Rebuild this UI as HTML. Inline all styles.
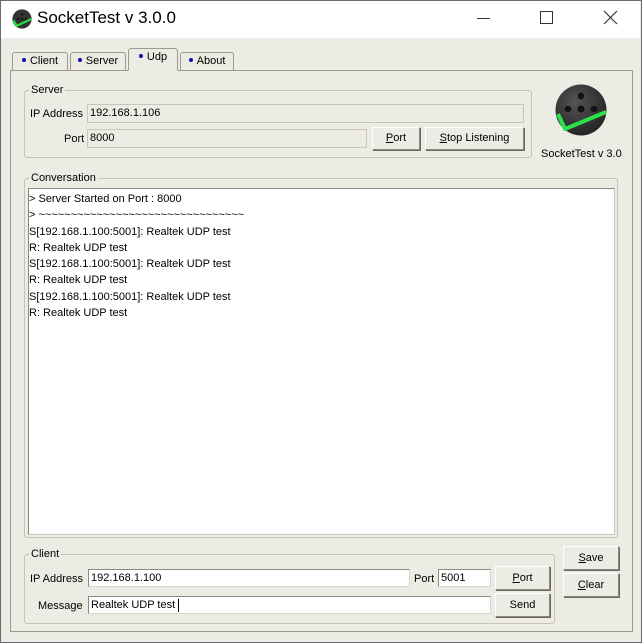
<!DOCTYPE html>
<html><head><meta charset="utf-8"><style>
*{box-sizing:border-box;margin:0;padding:0}
body{width:642px;height:643px;background:#fff;font-family:"Liberation Sans",Arial,sans-serif;font-size:11px;color:#000;position:relative;overflow:hidden}
.a{position:absolute}
.win{left:0;top:0;width:642px;height:643px;border:1px solid #6b6b6b;background:#ecebe4}
.title{left:1px;top:1px;width:639px;height:37px;background:#fff}
.grp{border:1px solid #c7c4b4;border-radius:3px}
.lbl{background:#ecebe4;padding:0 2px;line-height:13px}
.fld{border:1px solid #c9c6b8;background:#ecebe4;line-height:17px;padding-left:2px}
.wf{background:#fff;line-height:16px;padding-left:2px;border:1px solid;border-color:#8a8a80 #d8d6cc #d8d6cc #8a8a80}
.btn{border:1px solid;border-color:#fff #8a887e #8a887e #fff;background:#ecebe4;text-align:center;box-shadow:1px 1px 0 #6c6a60}
.tab{border:1px solid #9c9a8c;border-bottom:none;border-radius:3px 3px 0 0;background:#ecebe4;text-align:center;line-height:17px}
.dot{display:inline-block;width:4px;height:4px;border-radius:2px;background:#1010b0;vertical-align:middle;margin-right:4px;position:relative;top:-1px}
u{text-decoration:underline}
</style></head><body>
<div class="a win"></div>
<div class="a title"></div>
<svg class="a" style="left:12px;top:9px" width="20" height="20" viewBox="0 0 52 52"><circle cx="26" cy="26" r="25" fill="#333"/><circle cx="26" cy="14" r="3" fill="#111"/><circle cx="16" cy="26" r="3" fill="#111"/><circle cx="26" cy="26" r="3" fill="#111"/><circle cx="36" cy="26" r="3" fill="#111"/><path d="M4 30 L12 44 L50 26" stroke="#22dd44" stroke-width="6" fill="none"/></svg>
<div class="a" style="left:37px;top:8px;font-size:17px">SocketTest v 3.0.0</div>
<div class="a" style="left:477px;top:18px;width:13px;height:1px;background:#333"></div>
<div class="a" style="left:540px;top:11px;width:13px;height:13px;border:1px solid #333"></div>
<svg class="a" style="left:603px;top:10px" width="15" height="15"><path d="M1 1L14 14M14 1L1 14" stroke="#333" stroke-width="1.2"/></svg>

<div class="a" style="left:10px;top:70px;width:623px;height:562px;border:1px solid #9c9a8c"></div>
<div class="a tab" style="left:12px;top:52px;width:56px;height:18px"><span class="dot"></span>Client</div>
<div class="a tab" style="left:70px;top:52px;width:56px;height:18px"><span class="dot"></span>Server</div>
<div class="a tab" style="left:128px;top:48px;width:50px;height:23px;border-bottom:1px solid #ecebe4"><span class="dot"></span>Udp</div>
<div class="a tab" style="left:180px;top:52px;width:54px;height:18px"><span class="dot"></span>About</div>

<div class="a grp" style="left:24px;top:90px;width:508px;height:68px"></div>
<div class="a lbl" style="left:29px;top:84px">Server</div>
<div class="a" style="left:30px;top:108px">IP Address</div>
<div class="a fld" style="left:87px;top:104px;width:437px;height:19px">192.168.1.106</div>
<div class="a" style="left:64px;top:133px">Port</div>
<div class="a fld" style="left:87px;top:129px;width:280px;height:19px">8000</div>
<div class="a btn" style="left:372px;top:127px;width:48px;height:23px;line-height:21px"><u>P</u>ort</div>
<div class="a btn" style="left:425px;top:127px;width:99px;height:23px;line-height:21px"><u>S</u>top Listening</div>
<svg class="a" style="left:555px;top:84px" width="52" height="52" viewBox="0 0 52 52"><defs><radialGradient id="g" cx="0.4" cy="0.35" r="0.7"><stop offset="0" stop-color="#555"/><stop offset="1" stop-color="#222"/></radialGradient></defs><circle cx="26" cy="26" r="25.5" fill="url(#g)"/><ellipse cx="26" cy="12" rx="3" ry="3.5" fill="#111"/><ellipse cx="13" cy="25" rx="3.5" ry="3" fill="#111"/><circle cx="26" cy="25" r="3.5" fill="#111"/><ellipse cx="39" cy="25" rx="3.5" ry="3" fill="#111"/><path d="M3 30 L10 45 L51 28" stroke="#2ce24a" stroke-width="4" fill="none" stroke-linejoin="round"/></svg>
<div class="a" style="left:541px;top:148px">SocketTest v 3.0</div>

<div class="a grp" style="left:24px;top:178px;width:594px;height:360px"></div>
<div class="a lbl" style="left:29px;top:172px">Conversation</div>
<div class="a" style="left:28px;top:188px;width:587px;height:347px;background:#fff;border:1px solid;border-color:#8a887e #c8c6bc #c8c6bc #8a887e"></div>
<div class="a" style="left:29px;top:191px;line-height:16.3px">&gt; Server Started on Port : 8000<br>&gt; ~~~~~~~~~~~~~~~~~~~~~~~~~~~~~~~~<br>S[192.168.1.100:5001]: Realtek UDP test<br>R: Realtek UDP test<br>S[192.168.1.100:5001]: Realtek UDP test<br>R: Realtek UDP test<br>S[192.168.1.100:5001]: Realtek UDP test<br>R: Realtek UDP test</div>

<div class="a grp" style="left:24px;top:554px;width:531px;height:70px"></div>
<div class="a lbl" style="left:29px;top:548px">Client</div>
<div class="a" style="left:30px;top:573px">IP Address</div>
<div class="a wf" style="left:88px;top:569px;width:322px;height:18px">192.168.1.100</div>
<div class="a" style="left:414px;top:573px">Port</div>
<div class="a wf" style="left:438px;top:569px;width:53px;height:18px">5001</div>
<div class="a btn" style="left:495px;top:566px;width:55px;height:24px;line-height:22px"><u>P</u>ort</div>
<div class="a" style="left:38px;top:600px">Message</div>
<div class="a wf" style="left:88px;top:596px;width:403px;height:18px">Realtek UDP test<span style="display:inline-block;width:1px;height:13px;background:#000;margin-left:3px;vertical-align:middle"></span></div>
<div class="a btn" style="left:495px;top:593px;width:55px;height:24px;line-height:22px">Send</div>
<div class="a btn" style="left:563px;top:546px;width:56px;height:24px;line-height:22px"><u>S</u>ave</div>
<div class="a btn" style="left:563px;top:573px;width:56px;height:24px;line-height:22px"><u>C</u>lear</div>
</body></html>
